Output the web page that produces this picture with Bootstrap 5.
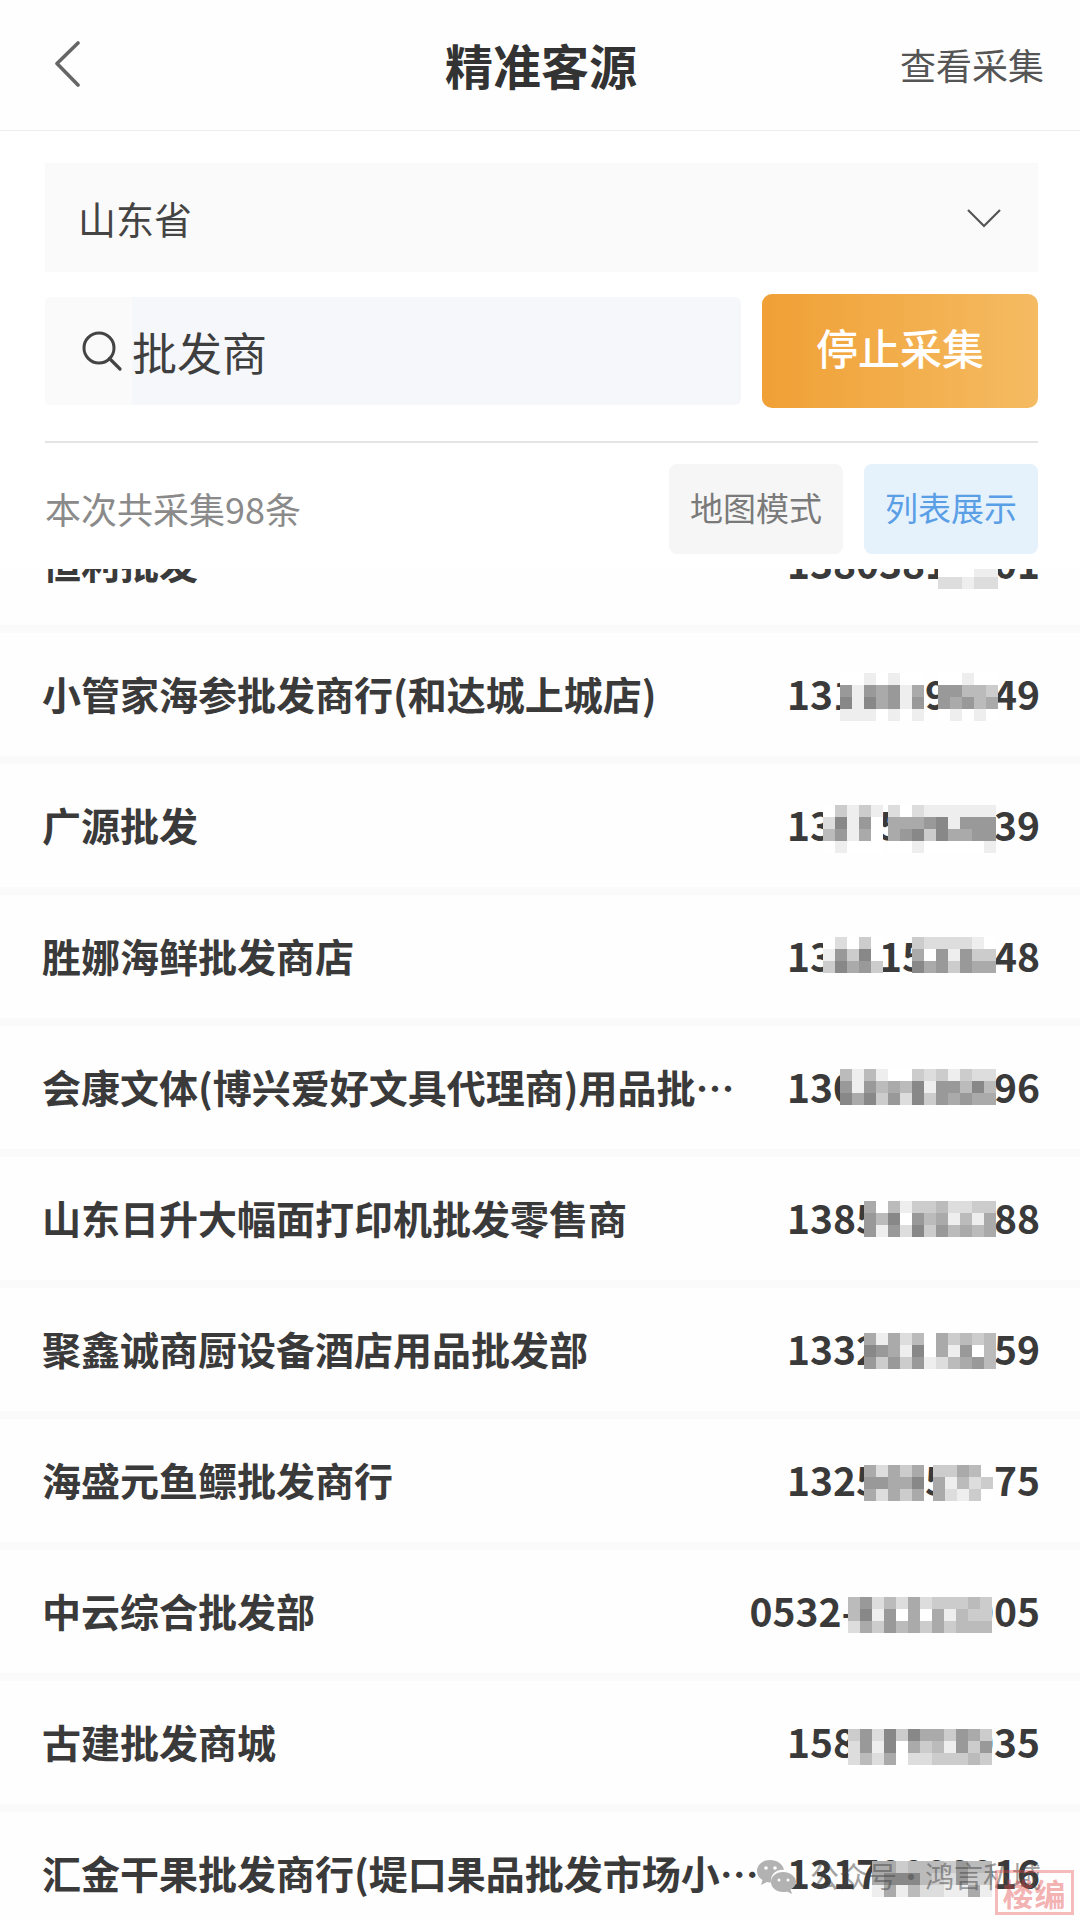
<!DOCTYPE html>
<html lang="zh-CN">
  <head>
    <meta charset="UTF-8" />
    <meta name="viewport" content="width=device-width, initial-scale=1.0" />
    <title>精准客源</title>
    <link
      href="https://cdn.jsdelivr.net/npm/bootstrap@5.3.2/dist/css/bootstrap.min.css"
      rel="stylesheet"
    />
    <style>
      body {
        width: 1080px;
        height: 1920px;
        overflow: hidden;
        position: relative;
        background: #fefefe;
        font-family: "Noto Sans CJK SC", "Noto Sans", sans-serif;
        color: #3a3a3a;
      }
      .top-head {
        height: 131px;
        padding: 0 36px;
        border-bottom: 1px solid #eeeeee;
      }
      .top-side {
        flex: 1 1 0;
      }
      .back-icon {
        display: block;
        margin-left: 18px;
        margin-top: -1px;
      }
      .top-title {
        font-size: 48px;
        font-weight: 700;
        color: #333333;
        margin: -3px 0 0 2px;
      }
      .top-link {
        font-size: 36px;
        color: #555555;
        margin-top: -3px;
      }
      .filter-box {
        padding: 32px 42px 15px 45px;
      }
      .city-select {
        height: 109px;
        padding: 0 36px 0 33px;
        background: #fafafb;
        font-size: 38px;
        color: #444444;
      }
      .search-row {
        margin-top: 22px;
        gap: 21px;
      }
      .search-box {
        flex: 1 1 0;
        height: 108px;
        border-radius: 6px;
        overflow: hidden;
        background: #f5f7fb;
      }
      .search-icon-cell {
        width: 87px;
        background: #fafafb;
        padding-left: 36px;
      }
      .search-text {
        font-size: 45px;
        color: #3f3f3f;
        line-height: 1;
      }
      .stop-btn {
        width: 276px;
        height: 114px;
        border: 0;
        border-radius: 10px;
        background: linear-gradient(90deg, #f0a035, #f5bb62);
        color: #ffffff;
        font-size: 42px;
        font-weight: 500;
        padding: 0 0 9px;
      }
      .stop-btn:hover {
        color: #ffffff;
      }
      .split-line {
        margin: 33px 0 21px;
        border-top: 2px solid #e4e4e4;
        opacity: 1;
      }
      .count-text {
        font-size: 36px;
        color: #8a8a8a;
        margin-top: -3px;
      }
      .mode-wrap {
        gap: 21px;
      }
      .mode-btn {
        width: 174px;
        height: 90px;
        padding: 0 0 3px;
        border: 0;
        border-radius: 8px;
        font-size: 33px;
        background: #f6f6f6;
        color: #7a7a7a;
      }
      .mode-btn.is-on {
        background: #e5f2fc;
        color: #5a9fe6;
      }
      .result-wrap {
        height: 1352px;
        overflow: hidden;
      }
      .result-list {
        margin-top: -67px;
        border-radius: 0;
      }
      .result-row {
        position: relative;
        height: 131px;
        padding: 0 40px 2px 42px;
        background: transparent;
        border: 0;
        border-bottom: 8px solid #fafafa;
      }
      .result-name {
        max-width: 722px;
        font-size: 39px;
        font-weight: 700;
        color: #3a3a3a;
      }
      .result-phone {
        font-size: 39px;
        font-weight: 700;
        color: #3a3a3a;
      }
      .blur-block {
        position: absolute;
        display: grid;
        grid-auto-rows: 12px;
      }
      .stamp-wx {
        position: absolute;
        left: 757px;
        top: 1859px;
      }
      .stamp-text {
        position: absolute;
        left: 810px;
        top: 1853px;
        font-size: 29px;
        line-height: 44px;
        word-spacing: -7px;
        white-space: nowrap;
        color: rgba(70, 70, 70, 0.5);
      }
      .stamp-seal {
        position: absolute;
        left: 995px;
        top: 1870px;
        width: 79px;
        height: 45px;
        border: 3px solid rgba(230, 70, 70, 0.36);
        color: rgba(230, 70, 70, 0.42);
        font-size: 31px;
        font-weight: 700;
        line-height: 39px;
        letter-spacing: 1px;
        text-align: center;
      }
    </style>
  </head>
  <body>
    <header class="top-head d-flex align-items-center">
      <div class="top-side">
        <svg class="back-icon" width="26" height="47" viewBox="0 0 26 47">
          <path d="M24 2 L3 22.5 L24 44" fill="none" stroke="#666" stroke-width="3.6" stroke-linecap="round" stroke-linejoin="round" />
        </svg>
      </div>
      <div class="top-title">精准客源</div>
      <div class="top-side top-link text-end">查看采集</div>
    </header>

    <section class="filter-box bg-white">
      <div class="city-select d-flex align-items-center justify-content-between">
        <span>山东省</span>
        <svg width="36" height="20" viewBox="0 0 36 20">
          <path d="M2 2 L18 18 L34 2" fill="none" stroke="#555" stroke-width="2.2" />
        </svg>
      </div>

      <div class="search-row d-flex align-items-center">
        <div class="search-box d-flex">
          <div class="search-icon-cell d-flex align-items-center">
            <svg width="42" height="42" viewBox="0 0 42 42">
              <circle cx="18" cy="18" r="15" fill="none" stroke="#444" stroke-width="3" />
              <path d="M28.5 28.5 L39 39" stroke="#444" stroke-width="3.2" stroke-linecap="round" />
            </svg>
          </div>
          <div class="search-text d-flex align-items-center">批发商</div>
        </div>
        <button type="button" class="btn stop-btn">停止采集</button>
      </div>

      <hr class="split-line" />

      <div class="d-flex align-items-center">
        <div class="count-text flex-grow-1">本次共采集98条</div>
        <div class="mode-wrap d-flex">
          <button type="button" class="btn mode-btn">地图模式</button>
          <button type="button" class="btn mode-btn is-on">列表展示</button>
        </div>
      </div>
    </section>

    <div class="result-wrap">
      <ul class="list-group result-list" id="resultList"></ul>
    </div>

    <svg class="stamp-wx" width="40" height="38" viewBox="0 0 40 38">
      <path d="M13 1 C5.500 1 0 6 0 12 C0 16 2 19 5.500 21 L4 26 L10 23 C12 23.500 13 23.500 14 23.500 C13 15 20 10 27 11 C26 5 20 1 13 1 Z" fill="#b2b2b2" />
      <path d="M26 13 C19 13 14 17.500 14 23 C14 28.500 19 33 26 33 C28 33 29 32.700 30 32.400 L35 35 L33.500 30.500 C37 28.500 39 26 39 23 C39 17.500 33 13 26 13 Z" fill="#b2b2b2" />
      <circle cx="9" cy="9" r="1.800" fill="#fff" /><circle cx="18" cy="9" r="1.800" fill="#fff" />
      <circle cx="22" cy="21" r="1.500" fill="#fff" /><circle cx="31" cy="21" r="1.500" fill="#fff" />
    </svg>
    <div class="stamp-text">公众号 · 鸿言私域</div>
    <div class="stamp-seal">楼编</div>

    <script src="https://cdn.jsdelivr.net/npm/bootstrap@5.3.2/dist/js/bootstrap.bundle.min.js"></script>
    <script>
      // each blur: [left, top inside the row, rows of grey digits]
      const rows = [
        { name: "恒利批发", phone: "13803810001", blur: [[938, 63, ["fffee", "ddedd"]]] },
        { name: "小管家海参批发商行(和达城上城店)", phone: "13100090049", blur: [
          [840, 40, ["ffefeff", "9e9a9ea", "8e8a9e9", "eeefefe"]],
          [938, 40, ["ffeff", "99bbc", "9a9ba", "fefef"]] ] },
        { name: "广源批发", phone: "13005000039", blur: [
          [823, 41, ["fcece", "d8e9f", "b9eaf", "fefff"]],
          [888, 41, ["dfdeeeeee", "aaa98e999", "a98c8aa99", "ffefffffe"]] ] },
        { name: "胜娜海鲜批发商店", phone: "13001500048", blur: [
          [823, 42, ["fdfcf", "e9c8f", "c8a9c"]],
          [912, 42, ["cddddef", "af9e9cc", "8a9c9aa"]] ] },
        { name: "会康文体(博兴爱好文具代理商)用品批发部零售", phone: "13000000096", blur: [
          [840, 43, ["bebeffcdcecdd", "9e9bab8e99b8b", "8a8c9d8c9a9aa"]] ] },
        { name: "山东日升大幅面打印机批发零售商", phone: "13850000088", blur: [
          [864, 44, ["afbeccbddcc", "9b8f9baebea", "9e9d8c9baba"]] ] },
        { name: "聚鑫诚商厨设备酒店用品批发部", phone: "13320000059", blur: [
          [864, 45, ["aeadbfacbcb", "89ae8fae9fb", "9c9c9edba9b"]] ] },
        { name: "海盛元鱼鳔批发商行", phone: "13250050075", blur: [
          [864, 46, ["adaca", "99aa8", "adaca"]],
          [933, 46, ["ccabf", "aebdc", "adecf"]] ] },
        { name: "中云综合批发部", phone: "0532-00000005", blur: [
          [848, 47, ["b9dbdadcccbc", "b8e9fafaebcc", "dac9bacacbbb"]] ] },
        { name: "古建批发商城", phone: "15800000035", blur: [
          [848, 48, ["c9d8c8aac9ac", "d9e8facbe9c9", "dbdafddcccbc"]] ] },
        { name: "汇金干果批发商行(堤口果品批发市场小商品批发", phone: "13170000016", blur: [
          [872, 49, ["aacbbbc9bb", "a888bcd9cc", "eaebddeeae"]] ] },
      ];

      const list = document.getElementById("resultList");

      rows.forEach((row) => {
        const li = document.createElement("li");
        li.className = "list-group-item result-row d-flex align-items-center justify-content-between";

        const name = document.createElement("div");
        name.className = "result-name text-truncate";
        name.textContent = row.name;

        const phone = document.createElement("div");
        phone.className = "result-phone flex-shrink-0";
        phone.textContent = row.phone;

        li.append(name, phone);

        // mosaic over the middle digits
        row.blur.forEach(([left, top, lines]) => {
          const block = document.createElement("div");
          block.className = "blur-block";
          block.style.left = left + "px";
          block.style.top = top + "px";
          block.style.gridTemplateColumns = `repeat(${lines[0].length}, 12px)`;
          lines.join("").split("").forEach((g) => {
            const cell = document.createElement("div");
            cell.style.background = "#" + g + g + g;
            block.append(cell);
          });
          li.append(block);
        });

        list.append(li);
      });
    </script>
  </body>
</html>
